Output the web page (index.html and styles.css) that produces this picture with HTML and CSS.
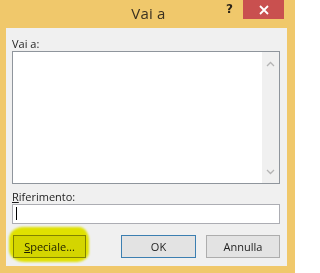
FILE: index.html
```html
<!DOCTYPE html>
<html>
<head>
<meta charset="utf-8">
<link rel="stylesheet" href="styles.css">
</head>
<body>
<div class="window">
  <div class="titlebar">
    <div class="title">Vai a</div>
    <div class="help">?</div>
    <div class="close">
      <svg width="10" height="10" viewBox="0 0 10 10"><path d="M1 1 L9 9 M9 1 L1 9" stroke="#fff" stroke-width="1.8" fill="none"/></svg>
    </div>
  </div>
  <div class="client">
    <div class="label">Vai a:</div>
    <div class="listbox">
      <div class="listarea"></div>
      <div class="scrollbar">
        <svg width="9" height="6" viewBox="0 0 9 6"><path d="M1 5 L4.5 1.5 L8 5" stroke="#b4b4b4" stroke-width="1.3" fill="none"/></svg>
        <svg width="9" height="6" viewBox="0 0 9 6"><path d="M1 1 L4.5 4.5 L8 1" stroke="#b4b4b4" stroke-width="1.3" fill="none"/></svg>
      </div>
    </div>
    <div class="label label2"><u>R</u>iferimento:</div>
    <div class="input"><span class="caret"></span></div>
    <div class="buttons">
      <div class="btn special"><u>S</u>peciale...</div>
      <div class="spacer"></div>
      <div class="btn default">OK</div>
      <div class="btn">Annulla</div>
      <div class="marker"></div>
    </div>
  </div>
</div>
</body>
</html>
```
FILE: styles.css
```css
html, body {
  margin: 0;
  padding: 0;
}
body {
  width: 295px;
  height: 273px;
  overflow: hidden;
  font-family: "Open Sans", "Noto Sans", sans-serif;
}
.window {
  width: 295px;
  height: 273px;
  background: #f0c86b;
  display: flex;
  flex-direction: column;
}
.titlebar {
  height: 28px;
  position: relative;
  display: flex;
  justify-content: center;
}
.title {
  font-size: 15px;
  color: #3a3020;
  line-height: 26px;
  letter-spacing: 0.2px;
  margin-left: 2px;
}
.help {
  position: absolute;
  left: 226px;
  top: 2px;
  font-size: 12px;
  font-weight: bold;
  color: #2b2418;
  font-family: "DejaVu Sans", sans-serif;
}
.close {
  position: absolute;
  left: 243px;
  top: 0;
  width: 41px;
  height: 19px;
  background: #c9504f;
  display: flex;
  align-items: center;
  justify-content: center;
}
.client {
  margin: 0 8px 7px 6px;
  flex: 1;
  background: #f0f0f0;
  padding: 8px 7px 0 6px;
  display: flex;
  flex-direction: column;
  font-size: 11px;
  color: #1e1e1e;
}
.label {
  height: 15px;
  line-height: 15px;
}
.label2 {
  margin-top: 5px;
}
.listbox {
  height: 133px;
  box-sizing: border-box;
  border: 1px solid #8f959c;
  background: #fff;
  display: flex;
}
.listarea {
  flex: 1;
}
.scrollbar {
  width: 17px;
  background: #f0f0f0;
  display: flex;
  flex-direction: column;
  justify-content: space-between;
  align-items: center;
  padding: 9px 0 8px;
}
.input {
  height: 20px;
  box-sizing: border-box;
  border: 1px solid #acadb3;
  background: #fff;
  padding: 2px 0 0 3px;
}
.caret {
  display: block;
  width: 1px;
  height: 13px;
  background: #000;
}
.buttons {
  margin-top: 11px;
  display: flex;
  position: relative;
  gap: 10px;
}
.btn {
  width: 74px;
  height: 23px;
  box-sizing: border-box;
  border: 1px solid #adadad;
  background: #e3e3e3;
  display: flex;
  align-items: center;
  justify-content: center;
  font-size: 11px;
}
.special {
  margin-left: 1px;
  width: 73px;
  border-color: #8a8a8a;
}
.spacer {
  flex: 1;
  margin-left: -10px;
}
.default {
  border-color: #3c7fb1;
  width: 75px;
}
.marker {
  position: absolute;
  left: -3px;
  top: -8px;
  width: 80px;
  height: 35px;
  background: #eef000;
  border-radius: 14px 10px 12px 16px / 12px 14px 10px 12px;
  mix-blend-mode: multiply;
  filter: blur(1px);
}
```
